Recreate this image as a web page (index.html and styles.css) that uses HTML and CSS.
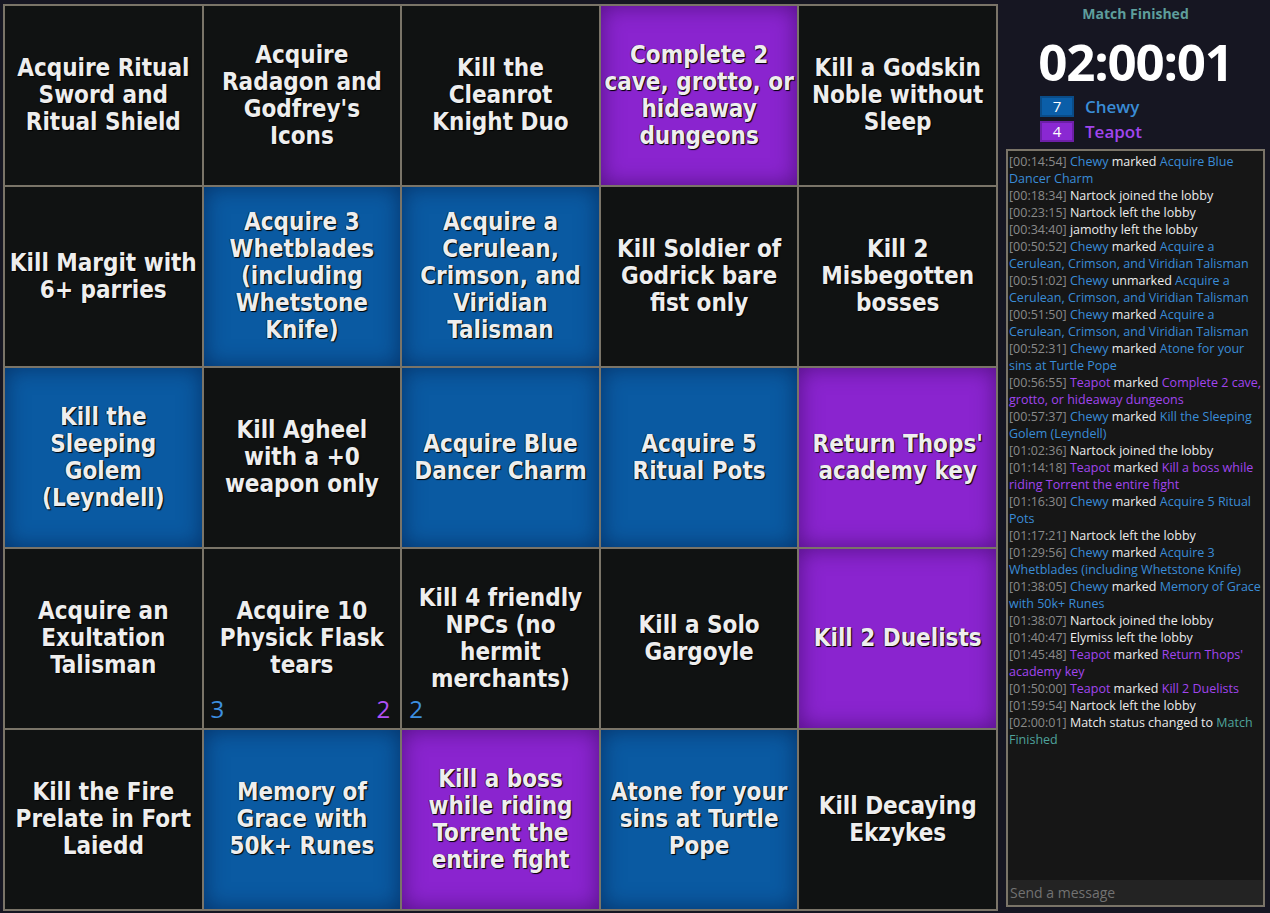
FILE: index.html
```html
<!DOCTYPE html>
<html>
<head>
<meta charset="utf-8">
<link rel="stylesheet" href="styles.css">
</head>
<body>
<div class="page">
  <div class="board">
    <div class="tile"><span>Acquire Ritual<br>Sword and<br>Ritual Shield</span></div>
    <div class="tile"><span>Acquire<br>Radagon and<br>Godfrey's<br>Icons</span></div>
    <div class="tile"><span>Kill the<br>Cleanrot<br>Knight Duo</span></div>
    <div class="tile purple"><span>Complete 2<br>cave, grotto, or<br>hideaway<br>dungeons</span></div>
    <div class="tile"><span>Kill a Godskin<br>Noble without<br>Sleep</span></div>

    <div class="tile"><span>Kill Margit with<br>6+ parries</span></div>
    <div class="tile blue"><span>Acquire 3<br>Whetblades<br>(including<br>Whetstone<br>Knife)</span></div>
    <div class="tile blue"><span>Acquire a<br>Cerulean,<br>Crimson, and<br>Viridian<br>Talisman</span></div>
    <div class="tile"><span>Kill Soldier of<br>Godrick bare<br>fist only</span></div>
    <div class="tile"><span>Kill 2<br>Misbegotten<br>bosses</span></div>

    <div class="tile blue"><span>Kill the<br>Sleeping<br>Golem<br>(Leyndell)</span></div>
    <div class="tile"><span>Kill Agheel<br>with a +0<br>weapon only</span></div>
    <div class="tile blue"><span>Acquire Blue<br>Dancer Charm</span></div>
    <div class="tile blue"><span>Acquire 5<br>Ritual Pots</span></div>
    <div class="tile purple"><span>Return Thops'<br>academy key</span></div>

    <div class="tile"><span>Acquire an<br>Exultation<br>Talisman</span></div>
    <div class="tile"><span>Acquire 10<br>Physick Flask<br>tears</span><b class="count c-blue left">3</b><b class="count c-purple right">2</b></div>
    <div class="tile"><span>Kill 4 friendly<br>NPCs (no<br>hermit<br>merchants)</span><b class="count c-blue left">2</b></div>
    <div class="tile"><span>Kill a Solo<br>Gargoyle</span></div>
    <div class="tile purple"><span>Kill 2 Duelists</span></div>

    <div class="tile"><span>Kill the Fire<br>Prelate in Fort<br>Laiedd</span></div>
    <div class="tile blue"><span>Memory of<br>Grace with<br>50k+ Runes</span></div>
    <div class="tile purple"><span>Kill a boss<br>while riding<br>Torrent the<br>entire fight</span></div>
    <div class="tile blue"><span>Atone for your<br>sins at Turtle<br>Pope</span></div>
    <div class="tile"><span>Kill Decaying<br>Ekzykes</span></div>
  </div>

  <div class="side">
    <div class="status">Match Finished</div>
    <div class="timer">02:00:01</div>
    <div class="teams">
      <div class="team"><span class="score s-blue">7</span><span class="tname n-blue">Chewy</span></div>
      <div class="team"><span class="score s-purple">4</span><span class="tname n-purple">Teapot</span></div>
    </div>
    <div class="chat">
      <div class="log">
        <div class="msg"><span class="ts">[00:14:54]</span> <span class="pb">Chewy</span> marked <span class="pb">Acquire Blue Dancer Charm</span></div>
        <div class="msg"><span class="ts">[00:18:34]</span> Nartock joined the lobby</div>
        <div class="msg"><span class="ts">[00:23:15]</span> Nartock left the lobby</div>
        <div class="msg"><span class="ts">[00:34:40]</span> jamothy left the lobby</div>
        <div class="msg"><span class="ts">[00:50:52]</span> <span class="pb">Chewy</span> marked <span class="pb">Acquire a Cerulean, Crimson, and Viridian Talisman</span></div>
        <div class="msg"><span class="ts">[00:51:02]</span> <span class="pb">Chewy</span> unmarked <span class="pb">Acquire a Cerulean, Crimson, and Viridian Talisman</span></div>
        <div class="msg"><span class="ts">[00:51:50]</span> <span class="pb">Chewy</span> marked <span class="pb">Acquire a Cerulean, Crimson, and Viridian Talisman</span></div>
        <div class="msg"><span class="ts">[00:52:31]</span> <span class="pb">Chewy</span> marked <span class="pb">Atone for your sins at Turtle Pope</span></div>
        <div class="msg"><span class="ts">[00:56:55]</span> <span class="pp">Teapot</span> marked <span class="pp">Complete 2 cave, grotto, or hideaway dungeons</span></div>
        <div class="msg"><span class="ts">[00:57:37]</span> <span class="pb">Chewy</span> marked <span class="pb">Kill the Sleeping Golem (Leyndell)</span></div>
        <div class="msg"><span class="ts">[01:02:36]</span> Nartock joined the lobby</div>
        <div class="msg"><span class="ts">[01:14:18]</span> <span class="pp">Teapot</span> marked <span class="pp">Kill a boss while riding Torrent the entire fight</span></div>
        <div class="msg"><span class="ts">[01:16:30]</span> <span class="pb">Chewy</span> marked <span class="pb">Acquire 5 Ritual Pots</span></div>
        <div class="msg"><span class="ts">[01:17:21]</span> Nartock left the lobby</div>
        <div class="msg"><span class="ts">[01:29:56]</span> <span class="pb">Chewy</span> marked <span class="pb">Acquire 3 Whetblades (including Whetstone Knife)</span></div>
        <div class="msg"><span class="ts">[01:38:05]</span> <span class="pb">Chewy</span> marked <span class="pb">Memory of Grace with 50k+ Runes</span></div>
        <div class="msg"><span class="ts">[01:38:07]</span> Nartock joined the lobby</div>
        <div class="msg"><span class="ts">[01:40:47]</span> Elymiss left the lobby</div>
        <div class="msg"><span class="ts">[01:45:48]</span> <span class="pp">Teapot</span> marked <span class="pp">Return Thops' academy key</span></div>
        <div class="msg"><span class="ts">[01:50:00]</span> <span class="pp">Teapot</span> marked <span class="pp">Kill 2 Duelists</span></div>
        <div class="msg"><span class="ts">[01:59:54]</span> Nartock left the lobby</div>
        <div class="msg"><span class="ts">[02:00:01]</span> Match status changed to <span class="pt">Match Finished</span></div>
      </div>
      <input class="input" type="text" placeholder="Send a message">
    </div>
  </div>
</div>
</body>
</html>
```
FILE: styles.css
```css
html, body {
  margin: 0;
  padding: 0;
  background: #161622;
  height: 100%;
}
.page {
  display: flex;
  padding: 4px 5px 2px 3px;
  height: 913px;
  box-sizing: border-box;
}
.board {
  width: 995px;
  height: 907px;
  display: grid;
  grid-template-columns: repeat(5, 1fr);
  grid-template-rows: repeat(5, 1fr);
  gap: 2px;
  padding: 2px;
  box-sizing: border-box;
  background: #7a7468;
  flex: none;
}
.tile {
  position: relative;
  background: #101212;
  display: flex;
  align-items: center;
  justify-content: center;
  text-align: center;
  padding: 0;
  overflow: hidden;
  font-family: "DejaVu Sans Condensed", "DejaVu Sans", sans-serif;
  font-weight: bold;
  font-size: 24px;
  line-height: 27px;
  color: #eeeeee;
  text-shadow: 1px 1px 1px #000, -1px 0 0 rgba(0,0,0,0.4);
}
.tile span {
  white-space: nowrap;
}
.tile.blue {
  background: #0a5aa2;
  box-shadow: inset 0 0 22px rgba(0, 20, 60, 0.55);
}
.tile.purple {
  background: #8a24cf;
  box-shadow: inset 0 0 22px rgba(40, 0, 70, 0.55);
}
.count {
  position: absolute;
  bottom: 5px;
  font-family: "Open Sans", "Noto Sans", sans-serif;
  font-weight: normal;
  font-size: 24px;
  line-height: 28px;
  text-shadow: none;
}
.count.left { left: 7px; }
.count.right { right: 10px; }
.c-blue { color: #3d8fe0; }
.c-purple { color: #b050f5; }

.side {
  flex: 1;
  margin-left: 8px;
  display: flex;
  flex-direction: column;
  margin-top: -4px;
  height: 907px;
  font-family: "Open Sans", "Noto Sans", sans-serif;
}
.status {
  text-align: center;
  color: #5e9e9c;
  font-weight: bold;
  font-size: 14px;
  line-height: 18px;
  margin-top: 5px;
}
.timer {
  text-align: center;
  color: #ffffff;
  font-weight: bold;
  font-size: 51px;
  line-height: 58px;
  margin-top: 9px;
  letter-spacing: -1.2px;
}
.teams {
  display: flex;
  flex-direction: column;
  gap: 4px;
  padding-left: 34px;
  margin-top: 6px;
}
.team {
  display: flex;
  align-items: center;
  gap: 11px;
}
.score {
  width: 30px;
  height: 17px;
  border: 2px solid;
  color: #fff;
  font-size: 15px;
  line-height: 17px;
  text-align: center;
}
.s-blue { background: #0b5ea8; border-color: #0a4c88; }
.s-purple { background: #8a28d2; border-color: #6d1fa8; }
.tname {
  font-size: 17px;
  line-height: 21px;
  font-weight: 600;
}
.n-blue { color: #3a8cd6; }
.n-purple { color: #a145ee; }

.chat {
  margin-top: 7px;
  flex: 1;
  border: 2px solid #7a7468;
  background: #161616;
  display: flex;
  flex-direction: column;
  min-height: 0;
}
.log {
  flex: 1;
  padding: 2px 1px 0 1px;
  font-size: 12.5px;
  line-height: 17px;
  color: #ececec;
  overflow: hidden;
}
.ts { color: #8a8a8a; }
.pb { color: #3a8cd6; }
.pp { color: #a145ee; }
.pt { color: #4ea39b; }
.input {
  height: 25px;
  border: none;
  background: #232323;
  color: #ddd;
  font-family: "Open Sans", "Noto Sans", sans-serif;
  font-size: 14px;
  padding: 0 2px;
  margin: 0;
  outline: none;
  box-sizing: border-box;
}
.input::placeholder { color: #727272; }
```
